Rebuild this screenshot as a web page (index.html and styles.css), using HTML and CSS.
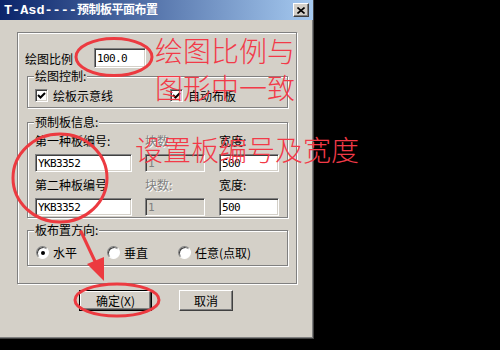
FILE: index.html
```html
<!DOCTYPE html>
<html lang="zh-CN">
<head>
  <meta charset="UTF-8">
  <title>T-Asd----预制板平面布置</title>
  <link rel="stylesheet" href="styles.css">
</head>
<body>
  <div class="dialog">
    <div class="titlebar">
      <span class="title-text">T-Asd----<span class="title-cjk">预制板平面布置</span></span>
      <span class="close-btn">
        <svg width="8" height="7" viewBox="0 0 8 7"><path d="M0.5 0.5 L7.5 6.5 M7.5 0.5 L0.5 6.5" stroke="#000" stroke-width="1.6"/></svg>
      </span>
    </div>

    <div class="frame">
      <div class="scale-row">
        <span class="scale-label">绘图比例</span>
        <input class="field scale-input" type="text" value="100.0">
      </div>

      <!-- 绘图控制 -->
      <div class="group draw-group">
        <div class="legend">绘图控制:</div>
        <div class="check-row">
          <label class="check-item">
            <span class="checkbox"><svg width="9" height="9" viewBox="0 0 9 9"><path d="M1 4 L3.5 6.5 L8 2" fill="none" stroke="#000" stroke-width="2"/></svg></span>
            绘板示意线
          </label>
          <label class="check-item">
            <span class="checkbox"><svg width="9" height="9" viewBox="0 0 9 9"><path d="M1 4 L3.5 6.5 L8 2" fill="none" stroke="#000" stroke-width="2"/></svg></span>
            自动布板
          </label>
        </div>
      </div>

      <!-- 预制板信息 -->
      <div class="group info-group">
        <div class="legend">预制板信息:</div>
        <div class="info-grid">
          <span>第一种板编号:</span>
          <span class="disabled-text">块数</span>
          <span>宽度:</span>
          <input class="field code-input" type="text" value="YKB3352">
          <input class="field num-input disabled" type="text" value="1" disabled>
          <input class="field num-input" type="text" value="500">
          <span>第二种板编号</span>
          <span class="disabled-text">块数:</span>
          <span>宽度:</span>
          <input class="field code-input" type="text" value="YKB3352">
          <input class="field num-input disabled" type="text" value="1" disabled>
          <input class="field num-input" type="text" value="500">
        </div>
      </div>

      <!-- 板布置方向 -->
      <div class="group dir-group">
        <div class="legend">板布置方向:</div>
        <div class="radio-row">
          <label class="radio-item"><span class="radio checked"></span>水平</label>
          <label class="radio-item"><span class="radio"></span>垂直</label>
          <label class="radio-item"><span class="radio"></span>任意(点取)</label>
        </div>
      </div>
    </div>

    <div class="btn-row">
      <button class="btn default">确定(X)</button>
      <button class="btn cancel">取消</button>
    </div>
  </div>

  <!-- 红色标注 -->
  <svg class="marks" width="500" height="350" viewBox="0 0 500 350">
    <g fill="none" stroke="#ec3a40" stroke-width="3">
      <ellipse cx="114" cy="57" rx="38" ry="18.5"/>
      <ellipse cx="60" cy="178" rx="47" ry="44"/>
      <ellipse cx="117" cy="300" rx="42" ry="16"/>
    </g>
    <path d="M79 231 L82 230 L97 262 L94 263 Z" fill="#ec3a40"/>
    <path d="M87 264 L104 257 L104 281 Z" fill="#ec3a40"/>
  </svg>
  <div class="note note-1">绘图比例与</div>
  <div class="note note-2">图形中一致</div>
  <div class="note note-3">设置板编号及宽度</div>
</body>
</html>
```

FILE: styles.css
```css
* {
  margin: 0;
  padding: 0;
  box-sizing: border-box;
}

body {
  width: 500px;
  height: 350px;
  background: #000;
  font-family: "Noto Sans CJK SC", sans-serif;
  font-size: 12px;
  color: #000;
  position: relative;
  overflow: hidden;
}

.dialog {
  width: 314px;
  height: 339px;
  background: #d4d0c8;
  border-right: 1px solid #404040;
  border-bottom: 1px solid #404040;
  box-shadow: inset -1px -1px #808080;
}

/* 标题栏 */
.titlebar {
  height: 20px;
  display: flex;
  align-items: center;
  padding: 0 4px;
  background: linear-gradient(90deg, #0a246a, #a6caf0);
}

.title-text {
  color: #fff;
  font-family: "Liberation Mono", monospace;
  font-weight: bold;
  font-size: 13.5px;
  line-height: 20px;
  white-space: nowrap;
}

.title-cjk {
  font-family: "Noto Sans CJK SC", sans-serif;
  font-size: 12px;
  letter-spacing: -0.5px;
}

.close-btn {
  margin-left: auto;
  width: 16px;
  height: 14px;
  display: flex;
  justify-content: center;
  align-items: center;
  background: #d4d0c8;
  border-top: 1px solid #fff;
  border-left: 1px solid #fff;
  border-right: 1px solid #404040;
  border-bottom: 1px solid #404040;
  box-shadow: inset -1px -1px #808080;
}

/* 外框 */
.frame {
  margin: 12px 0 0 17px;
  width: 280px;
  height: 252px;
  border: 1px solid #808080;
  box-shadow: inset 1px 1px #fff, 1px 1px #fff;
}

.scale-row {
  display: flex;
  align-items: center;
  margin-top: 15px;
  padding-left: 7px;
}

.scale-label {
  width: 69px;
}

/* 输入框 */
.field {
  height: 18px;
  padding: 0 2px;
  background: #fff;
  border: 1px solid;
  border-color: #808080 #fff #fff #808080;
  box-shadow: inset 1px 1px #404040, inset -1px -1px #d4d0c8;
  font-family: "DejaVu Sans Mono", monospace;
  font-size: 11px;
  letter-spacing: -0.6px;
  color: #000;
  outline: none;
}

.scale-input {
  width: 52px;
  height: 20px;
}

.code-input {
  width: 97px;
}

.num-input {
  width: 60px;
}

.field.disabled {
  background: #d4d0c8;
  color: #808080;
}

/* 分组框 */
.group {
  margin-left: 9px;
  width: 261px;
  border: 1px solid #808080;
  box-shadow: inset 1px 1px #fff, 1px 1px #fff;
}

.legend {
  width: fit-content;
  margin: -8px 0 0 6px;
  padding: 0 1px;
  line-height: 14px;
  background: #d4d0c8;
}

.draw-group {
  margin-top: 8px;
  height: 32px;
}

.check-row {
  display: flex;
  margin-top: 6px;
  padding-left: 7px;
}

.check-item {
  display: flex;
  align-items: center;
  gap: 5px;
  height: 13px;
  line-height: 13px;
}

.check-item:first-child {
  width: 135px;
}

.checkbox {
  width: 13px;
  height: 13px;
  display: flex;
  justify-content: center;
  align-items: center;
  background: #fff;
  border: 1px solid;
  border-color: #808080 #fff #fff #808080;
  box-shadow: inset 1px 1px #404040, inset -1px -1px #d4d0c8;
}

.info-group {
  margin-top: 14px;
  height: 96px;
}

.info-grid {
  display: grid;
  grid-template-columns: 110px 74px 60px;
  grid-template-rows: 14px 18px 14px 18px;
  row-gap: 6px;
  margin-top: 5px;
  padding-left: 7px;
  line-height: 14px;
}

.disabled-text {
  color: #808080;
  text-shadow: 1px 1px #fff;
}

.dir-group {
  margin-top: 12px;
  height: 36px;
}

.radio-row {
  display: flex;
  margin-top: 9px;
  padding-left: 8px;
}

.radio-item {
  display: flex;
  align-items: center;
  gap: 4px;
  height: 13px;
  line-height: 13px;
}

.radio-item:not(:last-child) {
  width: 71px;
}

.radio {
  width: 13px;
  height: 13px;
  display: flex;
  justify-content: center;
  align-items: center;
  border-radius: 50%;
  background: #fff;
  border: 1px solid;
  border-color: #808080 #fff #fff #808080;
  box-shadow: inset 1px 1px #404040;
}

.radio.checked:after {
  content: '';
  width: 4px;
  height: 4px;
  border-radius: 50%;
  background: #000;
}

/* 按钮 */
.btn-row {
  display: flex;
  gap: 27px;
  margin-top: 6px;
  padding-left: 79px;
}

.btn {
  height: 21px;
  background: #d4d0c8;
  font-family: "Noto Sans CJK SC", sans-serif;
  font-size: 12px;
  color: #000;
  border: 1px solid;
  border-color: #fff #404040 #404040 #fff;
  box-shadow: inset -1px -1px #808080;
}

.btn.default {
  width: 73px;
  border-color: #000;
  box-shadow: inset 1px 1px #fff, inset -1px -1px #404040, inset -2px -2px #808080;
}

.btn.cancel {
  width: 54px;
}

/* 标注 */
.marks {
  position: absolute;
  top: 0;
  left: 0;
}

.note {
  position: absolute;
  font-family: "Noto Sans CJK SC", sans-serif;
  font-weight: 300;
  font-size: 28px;
  line-height: 28px;
  color: #f23a48;
  white-space: nowrap;
}

.note-1 {
  left: 155px;
  top: 36px;
}

.note-2 {
  left: 155px;
  top: 73px;
}

.note-3 {
  left: 135px;
  top: 135px;
}
```
